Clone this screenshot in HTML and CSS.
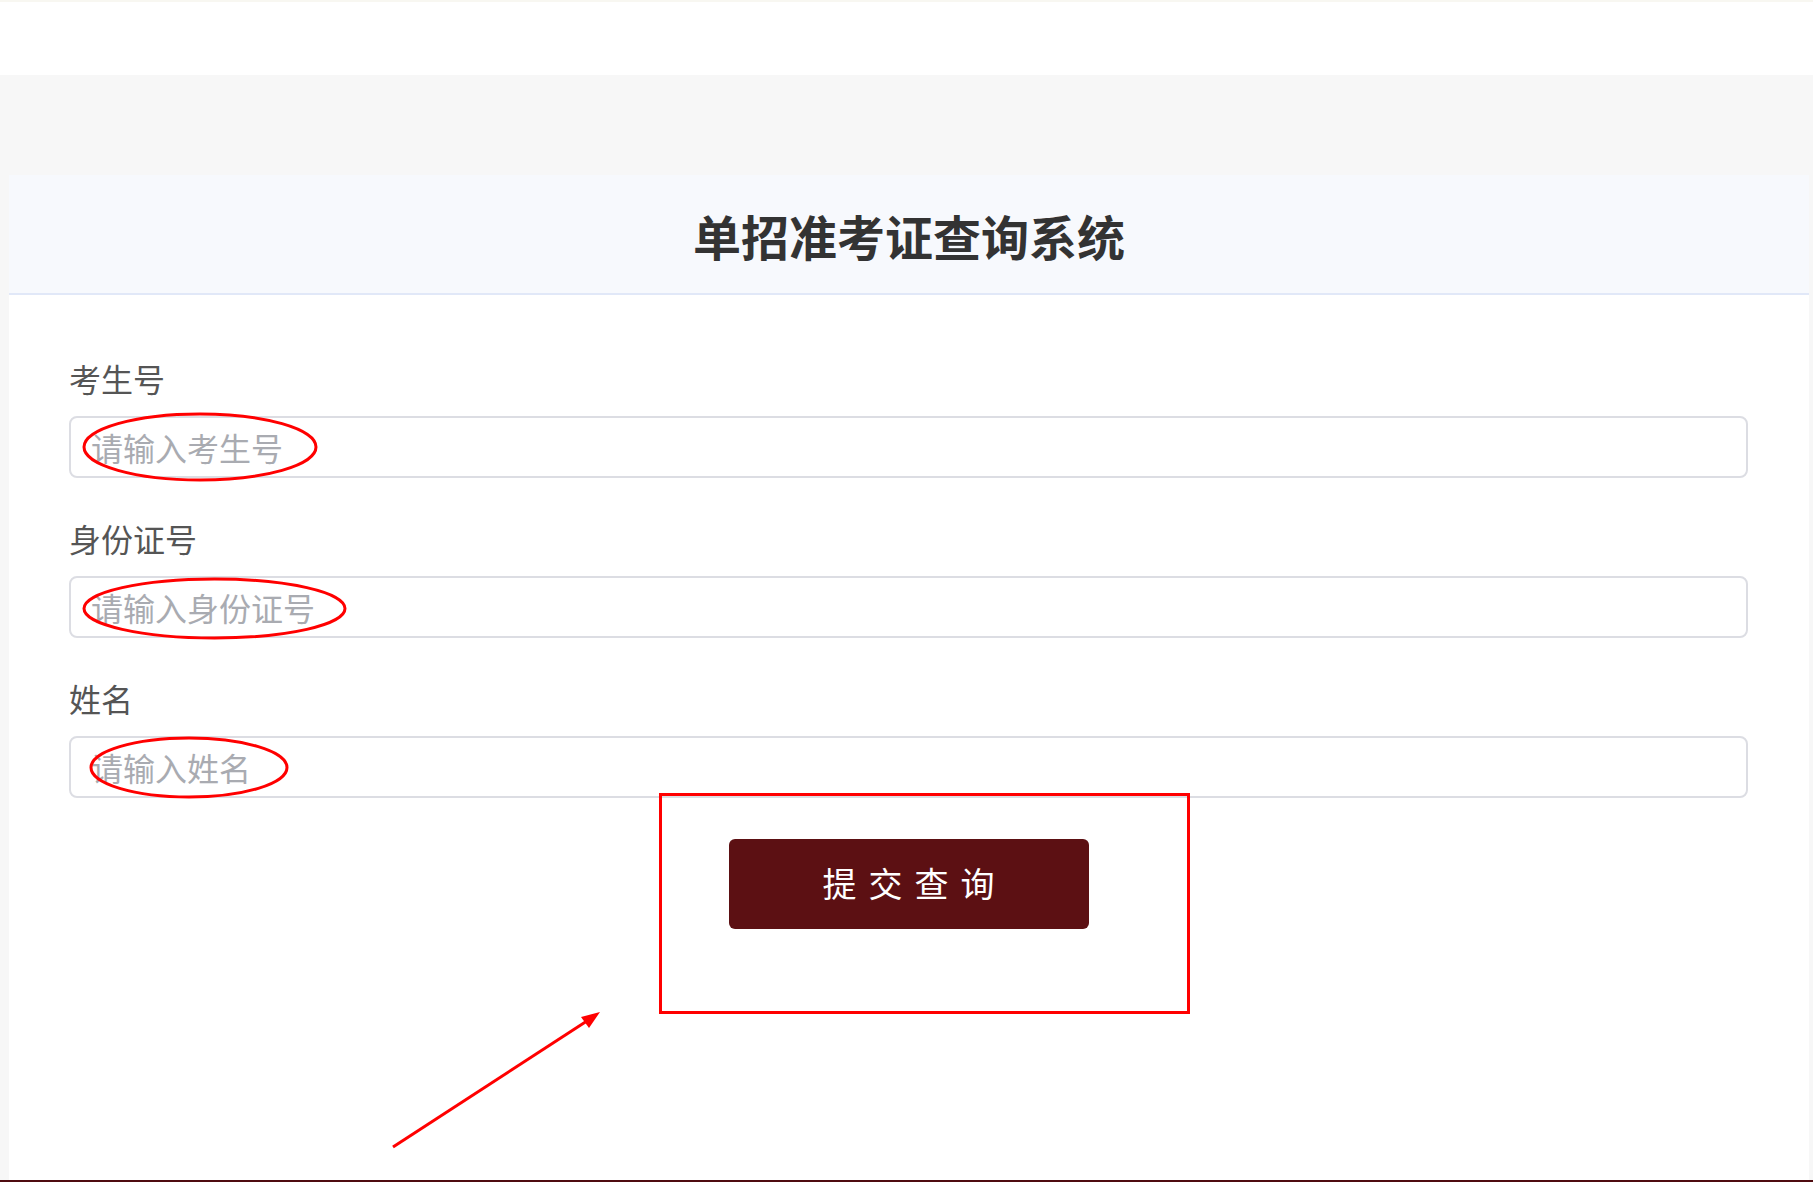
FILE: index.html
```html
<!DOCTYPE html>
<html lang="zh-CN">
<head>
<meta charset="utf-8">
<title>单招准考证查询系统</title>
<link rel="stylesheet" href="styles.css">
</head>
<body>
<div class="topbar"></div>
<main class="main">
  <section class="card">
    <header class="card-head">
      <h1 class="title">单招准考证查询系统</h1>
    </header>
    <form class="form">
      <div class="field">
        <label class="label" for="ksh">考生号</label>
        <input class="input" id="ksh" type="text" placeholder="请输入考生号">
      </div>
      <div class="field">
        <label class="label" for="sfz">身份证号</label>
        <input class="input" id="sfz" type="text" placeholder="请输入身份证号">
      </div>
      <div class="field">
        <label class="label" for="xm">姓名</label>
        <input class="input" id="xm" type="text" placeholder="请输入姓名">
      </div>
      <div class="actions">
        <button class="btn" type="button">提交查询</button>
      </div>
    </form>
  </section>
</main>
<footer class="footer"></footer>

<svg class="annot" width="1813" height="1182" viewBox="0 0 1813 1182" xmlns="http://www.w3.org/2000/svg">
  <g fill="none" stroke="#ff0000" stroke-width="3">
    <ellipse cx="200" cy="447" rx="116" ry="33"/>
    <ellipse cx="214.5" cy="608.5" rx="130.5" ry="29.5"/>
    <ellipse cx="189" cy="767.5" rx="98" ry="29.5"/>
    <rect x="660.5" y="794.5" width="528" height="218"/>
    <line x1="393" y1="1147" x2="590" y2="1019" stroke-width="3"/>
  </g>
  <polygon points="600,1012 581,1017 589,1028" fill="#ff0000"/>
</svg>
</body>
</html>
```

FILE: styles.css
```css
html, body {
  margin: 0;
  padding: 0;
}

body {
  background: #f7f7f7;
  font-family: "Noto Sans CJK SC", "Noto Sans", sans-serif;
  color: #555;
  position: relative;
  overflow: hidden;
  height: 1182px;
}

.topbar {
  height: 75px;
  background: #ffffff;
  border-top: 2px solid #f8f7f1;
  box-sizing: border-box;
}

.main {
  padding: 100px 4px 0 9px;
}

.card {
  width: 1800px;
  height: 1005px;
  background: #ffffff;
  display: flex;
  flex-direction: column;
}

.card-head {
  background: #f7f9fd;
  border-bottom: 2px solid #e1e8f8;
  display: flex;
  align-items: center;
  justify-content: center;
  padding-top: 4px;
  height: 114px;
}

.title {
  margin: 0;
  font-size: 48px;
  font-weight: 700;
  color: #333333;
  line-height: 1.2;
}

.form {
  padding: 59px 61px 0 60px;
  display: flex;
  flex-direction: column;
}

.field {
  display: flex;
  flex-direction: column;
  margin-bottom: 36px;
}

.label {
  font-size: 32px;
  line-height: 48px;
  color: #555555;
  margin-bottom: 14px;
}

.input {
  box-sizing: border-box;
  height: 62px;
  width: 100%;
  border: 2px solid #dcdde3;
  border-radius: 8px;
  padding: 0 20px;
  font-family: "Noto Sans CJK SC", "Noto Sans", sans-serif;
  font-size: 32px;
  color: #333;
  background: #ffffff;
  outline: none;
}

.input::placeholder {
  color: #a9abb1;
}

.actions {
  display: flex;
  justify-content: center;
  margin-top: 5px;
}

.btn {
  width: 360px;
  height: 90px;
  border: none;
  border-radius: 6px;
  background: #5c1013;
  color: #ffffff;
  font-family: "Noto Sans CJK SC", "Noto Sans", sans-serif;
  font-size: 34px;
  font-weight: 400;
  letter-spacing: 12px;
  padding: 0 0 3px 12px;
  cursor: pointer;
}

.footer {
  position: absolute;
  left: 0;
  right: 0;
  top: 1180px;
  height: 40px;
  background: #4f0c10;
}

.annot {
  position: absolute;
  top: 0;
  left: 0;
  pointer-events: none;
}
```
